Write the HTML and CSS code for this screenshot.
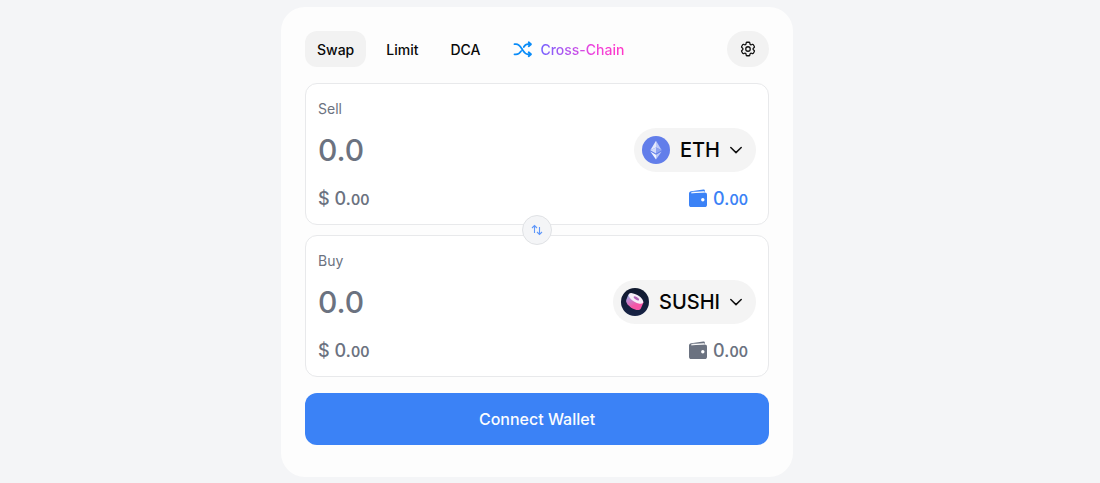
FILE: index.html
```html
<!DOCTYPE html>
<html lang="en">
<head>
<meta charset="utf-8">
<title>Swap</title>
<link rel="stylesheet" href="styles.css">
</head>
<body>
<main class="card">
  <header class="toolbar">
    <nav class="tabs">
      <button class="tab tab-active">Swap</button>
      <button class="tab">Limit</button>
      <button class="tab">DCA</button>
      <button class="tab tab-cross">
        <svg width="20" height="20" viewBox="0 0 20 20" fill="none" stroke="#0a8cf8" stroke-width="1.8" stroke-linecap="round" stroke-linejoin="round"><path d="M1.500 5.200h1.500c2.500 0 4 1.600 5.700 4.400l1.200 1.800c1.600 2.600 3 3.900 5.100 3.900h2.800M1.500 15.300H3c2.200 0 3.800-1.100 5.100-3.200M10.800 8c1.100-1.800 2.400-2.800 4.200-2.800h2.800M15.700 3.300l2.300 1.900-2.300 2M15.700 13.300l2.300 2-2.300 1.900"/></svg>
        <span class="cross-label">Cross-Chain</span>
      </button>
    </nav>
    <button class="settings" aria-label="Settings">
      <svg width="18" height="18" viewBox="0 0 24 24" fill="none" stroke="#111" stroke-width="1.7" stroke-linecap="round" stroke-linejoin="round"><path d="M9.594 3.94c.09-.542.56-.94 1.11-.94h2.593c.55 0 1.02.398 1.11.94l.213 1.281c.063.374.313.686.645.87.074.04.147.083.22.127.325.196.72.257 1.075.124l1.217-.456a1.125 1.125 0 0 1 1.37.49l1.296 2.247a1.125 1.125 0 0 1-.26 1.431l-1.003.827c-.293.241-.438.613-.43.992a7.723 7.723 0 0 1 0 .255c-.008.378.137.75.43.991l1.004.827c.424.35.534.955.26 1.43l-1.298 2.247a1.125 1.125 0 0 1-1.369.491l-1.217-.456c-.355-.133-.75-.072-1.076.124a6.47 6.47 0 0 1-.22.128c-.331.183-.581.495-.644.869l-.213 1.281c-.09.543-.56.94-1.11.94h-2.594c-.55 0-1.019-.398-1.11-.94l-.213-1.281c-.062-.374-.312-.686-.644-.87a6.52 6.52 0 0 1-.22-.127c-.325-.196-.72-.257-1.076-.124l-1.217.456a1.125 1.125 0 0 1-1.369-.49l-1.297-2.247a1.125 1.125 0 0 1 .26-1.431l1.004-.827c.292-.24.437-.613.43-.991a6.932 6.932 0 0 1 0-.255c.007-.38-.138-.751-.43-.992l-1.004-.827a1.125 1.125 0 0 1-.26-1.43l1.297-2.247a1.125 1.125 0 0 1 1.37-.491l1.216.456c.356.133.751.072 1.076-.124.072-.044.146-.086.22-.128.332-.183.582-.495.644-.869z"/><circle cx="12" cy="12" r="3"/></svg>
    </button>
  </header>

  <div class="panels">
    <section class="panel">
      <span class="panel-label">Sell</span>
      <div class="amount-row">
        <span class="amount">0.0</span>
        <button class="token">
          <svg class="token-logo" viewBox="0 0 28 28"><circle cx="14" cy="14" r="14" fill="#627eea"/><path d="M14 4.800L8.300 14.200 14 11.600z" fill="#e4e9fc"/><path d="M14 4.800l5.700 9.400L14 11.600z" fill="#bdc9f7"/><path d="M8.300 14.200L14 11.600v6z" fill="#d3dbfa"/><path d="M19.700 14.200L14 11.600v6z" fill="#8fa3f0"/><path d="M8.300 15.400l5.700 3.400v4.700z" fill="#f1f4fe"/><path d="M19.700 15.400L14 18.800v4.700z" fill="#bdc9f7"/></svg>
          <span>ETH</span>
          <svg class="chevron" viewBox="0 0 12 12"><path d="M.8 3.500L6 8.600l5.200-5.100"/></svg>
        </button>
      </div>
      <div class="value-row">
        <span class="value">$ 0.<small>00</small></span>
        <span class="balance balance-active">
          <svg width="20" height="20" viewBox="0 -.4 20 20" fill="currentColor"><path d="M1 5.200C1 3.700 1.900 3 3.200 2.800L15.200 1.100c1-.1 1.700.4 1.700 1.300v1H5.200c-1 0-1.700.3-2.100.8h13.600c1.500 0 2.300.8 2.300 2.200v10c0 1.500-.8 2.300-2.300 2.300H3.300C1.800 18.700 1 17.900 1 16.400z"/><path d="M3.300 4.500L16.200 3.400" stroke="#fff" stroke-width="1"/><circle cx="14.800" cy="11.400" r="1.700" fill="#fff"/></svg>
          <span>0.<small>00</small></span>
        </span>
      </div>
    </section>

    <button class="flip" aria-label="Switch tokens">
      <svg width="12" height="12" viewBox="0 0 12 12" fill="none" stroke="#6098fa" stroke-width="1.100"><path d="M3.500 9V1.500M1 4l2.500-2.500L6 4M8.500 3v7.500M6 8l2.500 2.500L11 8"/></svg>
    </button>

    <section class="panel">
      <span class="panel-label">Buy</span>
      <div class="amount-row">
        <span class="amount">0.0</span>
        <button class="token">
          <svg class="token-logo" viewBox="0 0 28 28">
            <defs>
              <linearGradient id="night" x1="0" y1="0" x2="0" y2="1"><stop offset="0" stop-color="#10192e"/><stop offset="1" stop-color="#172346"/></linearGradient>
              <linearGradient id="roll" x1="0" y1="0" x2=".6" y2="1"><stop offset="0" stop-color="#8fc0ee"/><stop offset=".4" stop-color="#c87fc9"/><stop offset=".75" stop-color="#f655a5"/></linearGradient>
            </defs>
            <circle cx="14" cy="14" r="14" fill="url(#night)"/>
            <path d="M7.400 6.500L5.200 12c-1 3.500 5 8.800 10.200 9.900 2 .4 3.700 0 4.300-1.200l3-6.600z" fill="url(#roll)"/>
            <ellipse cx="14.900" cy="10.400" rx="8.300" ry="3.700" transform="rotate(31 14.900 10.400)" fill="#f7eff9"/>
            <ellipse cx="15.400" cy="10.300" rx="3.200" ry="1.300" transform="rotate(31 15.400 10.300)" fill="#b264b8"/>
          </svg>
          <span>SUSHI</span>
          <svg class="chevron" viewBox="0 0 12 12"><path d="M.8 3.500L6 8.600l5.200-5.100"/></svg>
        </button>
      </div>
      <div class="value-row">
        <span class="value">$ 0.<small>00</small></span>
        <span class="balance">
          <svg width="20" height="20" viewBox="0 -.4 20 20" fill="currentColor"><path d="M1 5.200C1 3.700 1.900 3 3.200 2.800L15.200 1.100c1-.1 1.700.4 1.700 1.300v1H5.200c-1 0-1.700.3-2.100.8h13.600c1.500 0 2.300.8 2.300 2.200v10c0 1.500-.8 2.300-2.300 2.300H3.300C1.800 18.700 1 17.900 1 16.400z"/><path d="M3.300 4.500L16.200 3.400" stroke="#fff" stroke-width="1"/><circle cx="14.800" cy="11.400" r="1.700" fill="#fff"/></svg>
          <span>0.<small>00</small></span>
        </span>
      </div>
    </section>
  </div>

  <button class="connect">Connect Wallet</button>
</main>
</body>
</html>
```

FILE: styles.css
```css
* {
  box-sizing: border-box;
}

body {
  margin: 0;
  height: 483px;
  padding: 7px 0 0 281px;
  overflow: hidden;
  background: #f4f5f7;
  color: #090909;
  font-family: Inter, "Liberation Sans", sans-serif;
}

button {
  margin: 0;
  padding: 0;
  border: 0;
  background: none;
  color: inherit;
  font: inherit;
}

svg {
  display: block;
  flex: none;
}

.card {
  width: 512px;
  height: 470px;
  padding: 24px;
  border-radius: 24px;
  background: #fdfdfd;
}

.toolbar {
  display: flex;
  justify-content: space-between;
  height: 36px;
  margin-bottom: 16px;
}

.tabs {
  display: flex;
  gap: 8px;
}

.tab {
  display: flex;
  align-items: center;
  height: 36px;
  padding: 1px 12px 0;
  border-radius: 12px;
  font-size: 14px;
  font-weight: 500;
}

.tab-active {
  background: #f2f2f2;
}

.tab-cross {
  gap: 7px;
  padding-left: 13px;
}

.tab-cross svg {
  margin-top: -2px;
}

.cross-label {
  background: linear-gradient(90deg, #7563ff, #f044dc 65%, #ff38c7);
  -webkit-background-clip: text;
  background-clip: text;
  color: transparent;
}

.settings {
  display: flex;
  align-items: center;
  justify-content: center;
  width: 42px;
  border-radius: 18px;
  background: #f2f2f2;
}

.panels {
  position: relative;
  display: flex;
  flex-direction: column;
  gap: 10px;
}

.panel {
  height: 142px;
  padding: 15px 12px 0;
  border: 1px solid #e8e9eb;
  border-radius: 12px;
  background: #fff;
  color: #6b7280;
}

.panel-label {
  display: block;
  font-size: 14px;
  line-height: 20px;
}

.amount-row {
  display: flex;
  align-items: center;
  justify-content: space-between;
  height: 44px;
  margin-top: 9px;
}

.amount {
  font-size: 30px;
  font-weight: 500;
}

.token {
  display: flex;
  align-items: center;
  gap: 10px;
  height: 44px;
  padding: 0 14px 0 8px;
  border-radius: 22px;
  background: #f4f4f4;
  color: #050505;
  font-size: 20px;
  font-weight: 500;
}

.token-logo {
  width: 28px;
  height: 28px;
}

.chevron {
  width: 12px;
  height: 12px;
  fill: none;
  stroke: #111;
  stroke-width: 1.5;
  stroke-linecap: round;
  stroke-linejoin: round;
}

.value-row {
  display: flex;
  align-items: center;
  justify-content: space-between;
  height: 28px;
  margin-top: 12px;
  padding-right: 8px;
  font-size: 18px;
  font-weight: 500;
}

.value-row small {
  font-size: 14px;
  font-weight: 600;
}

.balance {
  display: flex;
  align-items: center;
  gap: 5px;
}

.balance-active {
  color: #3b82f6;
}

.flip {
  position: absolute;
  top: 132px;
  left: 217px;
  display: flex;
  align-items: center;
  justify-content: center;
  width: 30px;
  height: 30px;
  border: 1px solid #e0e2e5;
  border-radius: 50%;
  background: #f4f5f7;
}

.connect {
  display: block;
  width: 100%;
  height: 52px;
  margin-top: 16px;
  border-radius: 12px;
  background: #3b82f6;
  color: #fafcff;
  font-size: 16px;
  font-weight: 500;
}
```
